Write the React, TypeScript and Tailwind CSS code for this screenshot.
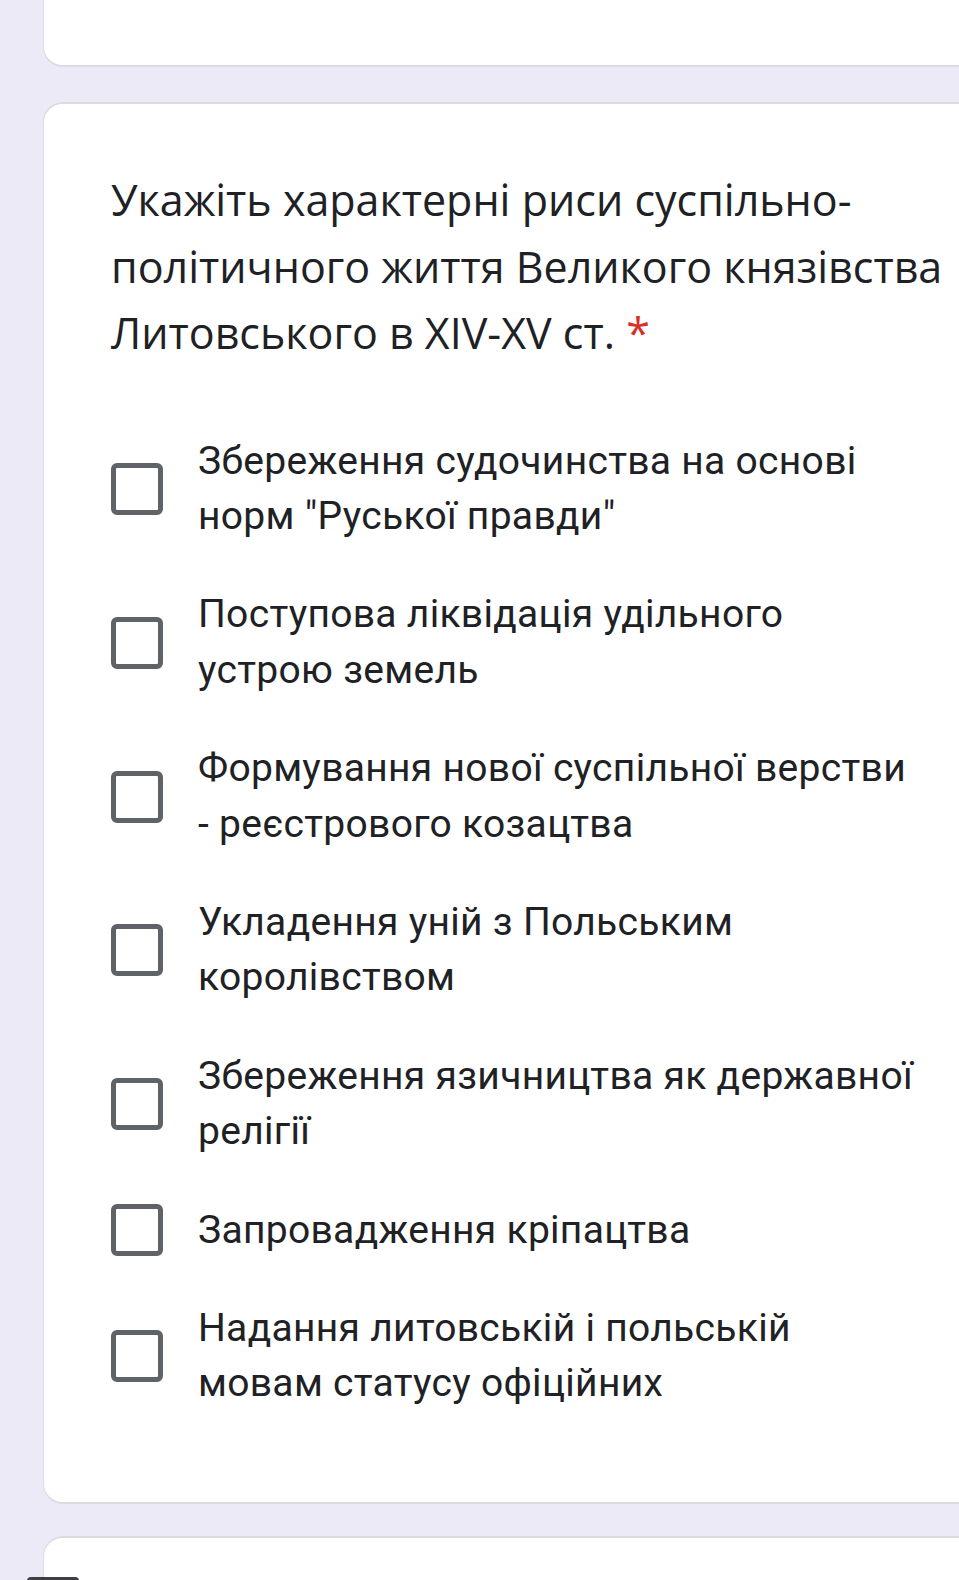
import React from 'react';

const options: string[][] = [
  ['Збереження судочинства на основі', 'норм "Руської правди"'],
  ['Поступова ліквідація удільного', 'устрою земель'],
  ['Формування нової суспільної верстви', '- реєстрового козацтва'],
  ['Укладення уній з Польським', 'королівством'],
  ['Збереження язичництва як державної', 'релігії'],
  ['Запровадження кріпацтва'],
  ['Надання литовській і польській', 'мовам статусу офіційних'],
];

function Checkbox() {
  return (
    <div className="w-[52px] h-[52px] shrink-0 rounded-[6px] border-[5px] border-[#5f6368] bg-white" />
  );
}

export default function App() {
  return (
    <div className="relative w-[959px] h-[1580px] overflow-hidden bg-[#eceaf6]">
      {/* previous card tail */}
      <div className="ml-[43px] w-[960px] h-[67px] bg-white border-l border-b-2 border-[#dadce0] rounded-bl-[20px]" />

      {/* question card */}
      <div className="mt-[35px] ml-[43px] w-[960px] h-[1402px] bg-white border-l border-t-2 border-b-2 border-[#dadce0] rounded-l-[20px] pl-[67px] pt-[63px]">
        <h2
          className="text-[43px] leading-[66.5px] text-[#202124] whitespace-nowrap"
          style={{ fontFamily: '"Open Sans", Roboto, sans-serif' }}
        >
          Укажіть характерні риси суспільно-
          <br />
          політичного життя Великого князівства
          <br />
          Литовського в XIV-XV ст. <span className="text-[#d93025]">*</span>
        </h2>

        <div className="mt-[67px] flex flex-col gap-[43px]">
          {options.map((lines, i) => (
            <div key={i} className="flex items-center gap-[35px]">
              <Checkbox />
              <div
                className="text-[39px] leading-[55.4px] text-[#202124] tracking-[0.3px] whitespace-nowrap"
                style={{ fontFamily: 'Roboto, "Liberation Sans", sans-serif' }}
              >
                {lines.map((l, j) => (
                  <div key={j}>{l}</div>
                ))}
              </div>
            </div>
          ))}
        </div>
      </div>

      {/* next card */}
      <div className="mt-[32px] ml-[43px] w-[960px] h-[100px] bg-white border-l border-t-2 border-[#dadce0] rounded-tl-[20px]" />

      <div className="absolute left-[27px] top-[1577px] w-[52px] h-[6px] rounded-t-[4px] bg-[#3c4043]" />
    </div>
  );
}
